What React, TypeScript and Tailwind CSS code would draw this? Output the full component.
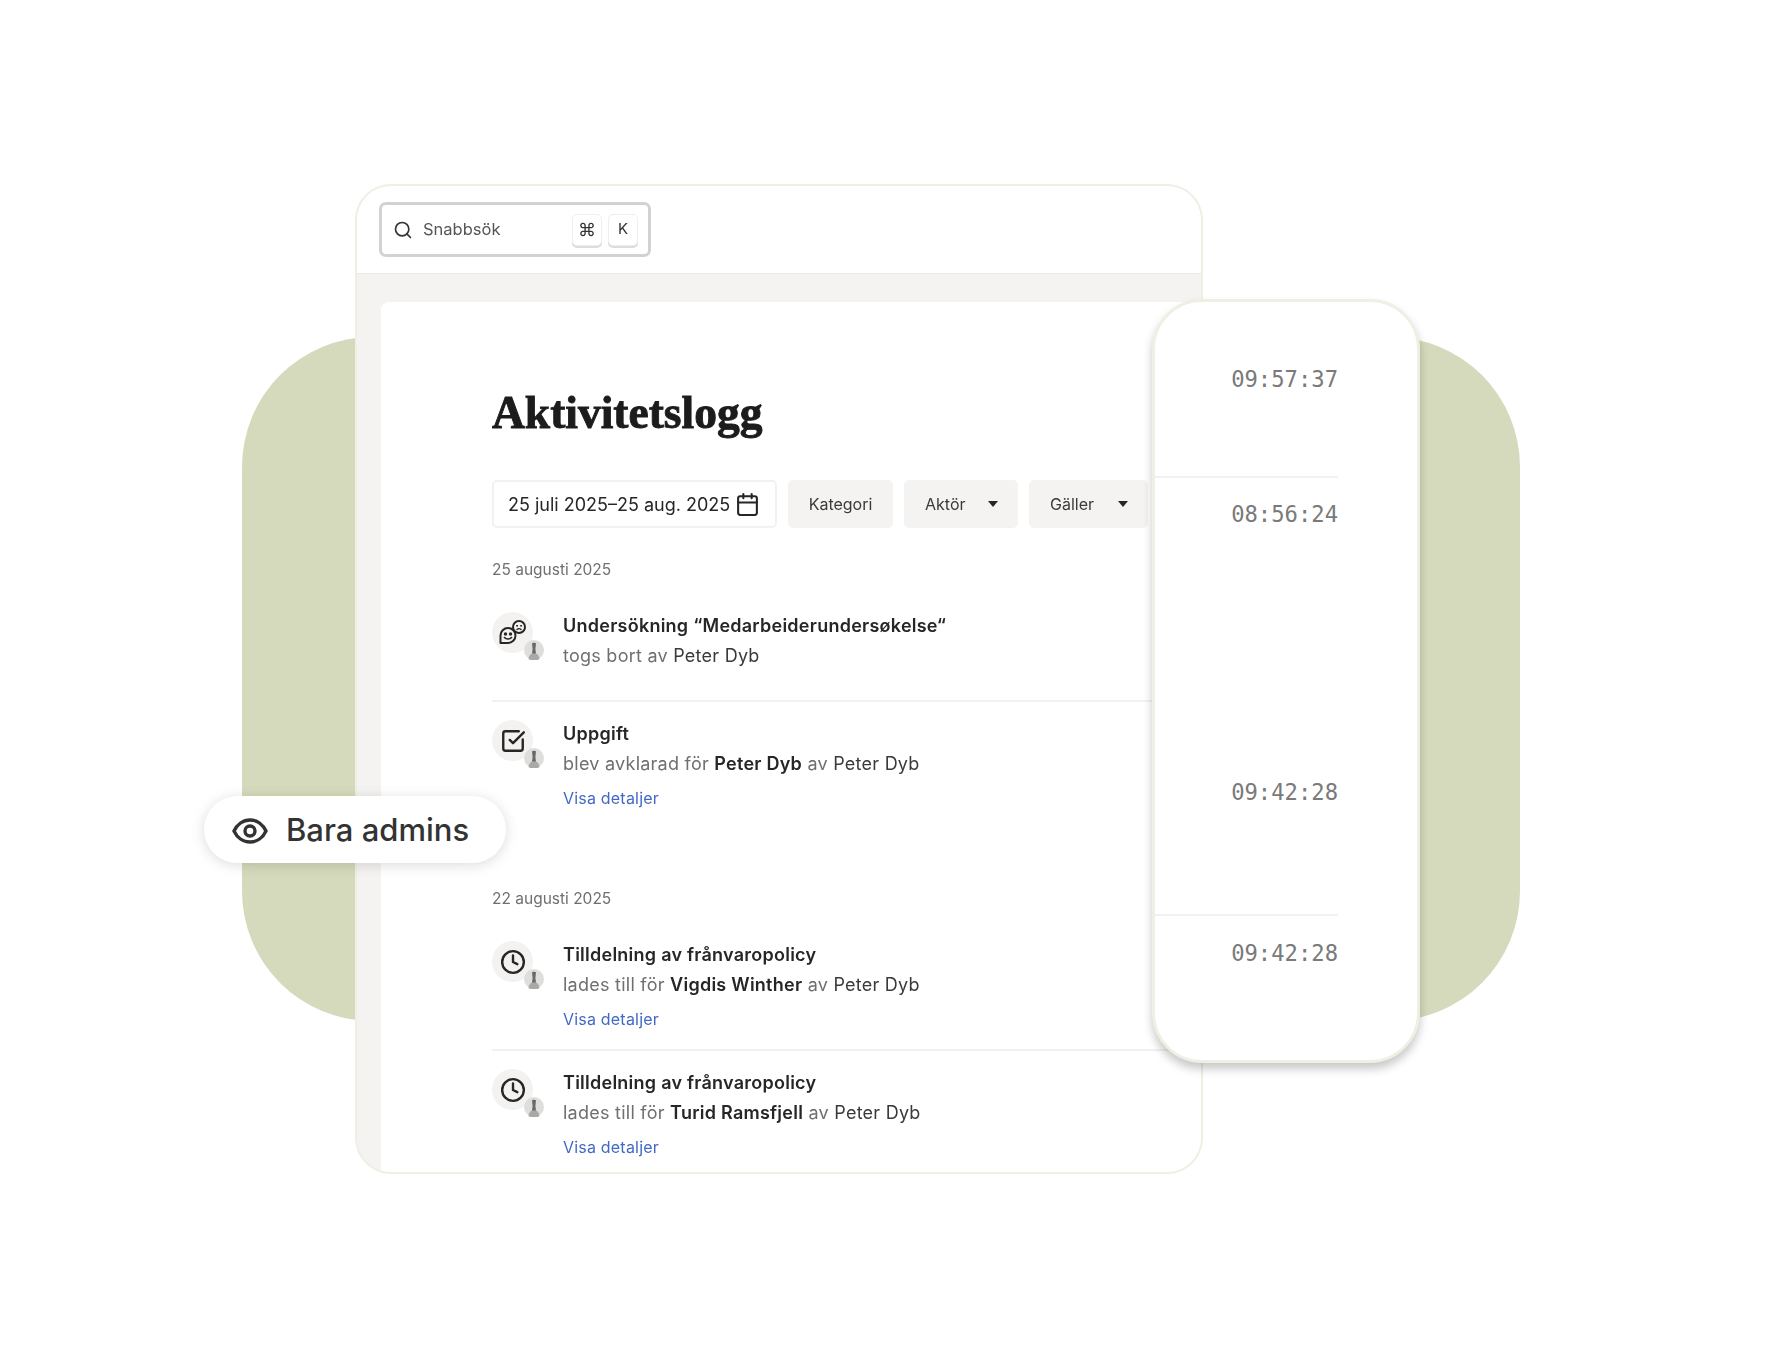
import { Calendar, Clock, Search, SquareCheckBig } from 'lucide-react'

function Avatar() {
  return (
    <svg className="absolute left-[32px] top-[28px]" width="20" height="20" viewBox="0 0 20 20">
      <circle cx="10" cy="10" r="10" fill="#dededc" />
      <path d="M4.500 19c.5-4 3-6 5.500-6s5 2 5.500 6a10 10 0 0 1-11 0z" fill="#a9a9a7" />
      <path d="M8 3.500c0-1 4-1 4 0l-.6 5.500.6 4.500h-4l.6-4.500z" fill="#6a6a68" />
    </svg>
  )
}

function BubbleIcon() {
  return (
    <svg width="28" height="26" viewBox="0 0 28 26" fill="none" stroke="#262626" strokeWidth="2" strokeLinecap="round" strokeLinejoin="round">
      <circle cx="20" cy="7" r="6" />
      <circle cx="18" cy="5.800" r=".5" fill="#262626" strokeWidth="1" />
      <circle cx="22" cy="5.800" r=".5" fill="#262626" strokeWidth="1" />
      <path d="M18 9.500c1-1 3-1 4 0" strokeWidth="1.400" />
      <path d="M1.500 23V15.500a7.500 7.500 0 1 1 7.500 7.500z" fill="#f3f2f0" />
      <circle cx="6.500" cy="14" r=".7" fill="#262626" />
      <circle cx="11.500" cy="14" r=".7" fill="#262626" />
      <path d="M5.500 17.500c1.500 2 5.500 2 7 0" strokeWidth="1.600" />
    </svg>
  )
}

function EyeIcon() {
  return (
    <svg width="36" height="26" viewBox="0 0 36 26" fill="none" stroke="#333" strokeWidth="3.400">
      <path d="M2 13C5 6.500 11 2 18 2s13 4.500 16 11c-3 6.500-9 11-16 11S5 19.500 2 13z" />
      <circle cx="18" cy="13" r="5" />
    </svg>
  )
}

function Caret() {
  return <span className="ml-auto h-0 w-0 border-x-[5px] border-t-[6px] border-x-transparent border-t-[#262626]" />
}

function Row({ icon, title, children, link, className }: { icon: React.ReactNode; title: string; children: React.ReactNode; link?: boolean; className?: string }) {
  return (
    <div className={`flex gap-[30px] ${className}`}>
      <div className="relative mt-[1px] flex h-[41px] w-[41px] shrink-0 items-center justify-center rounded-full bg-[#f3f2f0]">
        {icon}
        <Avatar />
      </div>
      <div className="text-[18px] leading-[30px] tracking-[0.25px] text-[#6f6f6d]">
        <p className="font-semibold text-[#262626]">{title}</p>
        <p>{children}</p>
        {link && <p className="mt-[9px] text-[16px] leading-[20px] tracking-[0.2px] text-[#4169c4]">Visa detaljer</p>}
      </div>
    </div>
  )
}

const B = ({ children }: { children: React.ReactNode }) => <b className="font-semibold text-[#262626]">{children}</b>
const N = ({ children }: { children: React.ReactNode }) => <span className="text-[#3a3a38]">{children}</span>

export default function App() {
  return (
    <div className="relative h-[1358px] w-[1776px] overflow-hidden bg-white pt-[184px] pl-[355px] font-['Inter',sans-serif]">
      <div className="absolute left-[242px] top-[337px] h-[684px] w-[1278px] rounded-[130px] bg-[#d4dabb]" />

      <div className="relative h-[990px] w-[848px] overflow-hidden rounded-[36px] border-2 border-[#eef0e4] bg-[#f4f3f1] blur-[0.4px]">
        <div className="flex h-[88px] items-center border-b border-[#ecebe8] bg-white pl-[22px]">
          <div className="flex h-[55px] w-[272px] items-center rounded-[7px] border-[3px] border-[#d2d2d0] bg-white pl-[11px] pr-[10px] text-[16.5px] text-[#555553]">
            <Search size={20} strokeWidth={2} className="text-[#333]" />
            <span className="ml-[10px]">Snabbsök</span>
            <div className="ml-auto flex gap-[6px] text-[15px] text-[#333]">
              <span className="flex h-[32px] w-[30px] items-center justify-center rounded-[5px] border border-[#eeeeec] bg-white text-[18px] shadow-[0_2px_0_#dcdcda]">⌘</span>
              <span className="flex h-[32px] w-[30px] items-center justify-center rounded-[5px] border border-[#eeeeec] bg-white shadow-[0_2px_0_#dcdcda]">K</span>
            </div>
          </div>
        </div>

        <div className="ml-[24px] mt-[28px] h-[900px] rounded-tl-[8px] bg-white pl-[111px] pt-[85px]">
          <h1 className="h-[52px] font-['Liberation_Serif',serif] text-[45.5px] font-bold leading-[52px] text-[#1c1c1c] [-webkit-text-stroke:0.9px_#1c1c1c]">Aktivitetslogg</h1>

          <div className="mt-[41px] flex h-[48px] gap-[11px] text-[16px] text-[#3a3a38]">
            <div className="flex w-[285px] items-center justify-between rounded-[5px] border-2 border-[#f1f1ef] pl-[14px] pr-[15px] text-[18px] text-[#262626]">
              25 juli 2025–25 aug. 2025
              <Calendar size={25} strokeWidth={2} />
            </div>
            <div className="flex w-[105px] items-center justify-center rounded-[5px] bg-[#f4f3f1]">Kategori</div>
            <div className="flex w-[114px] items-center rounded-[5px] bg-[#f4f3f1] pl-[21px] pr-[20px]">Aktör<Caret /></div>
            <div className="flex w-[119px] items-center rounded-[5px] bg-[#f4f3f1] pl-[21px] pr-[20px]">Gäller<Caret /></div>
          </div>

          <p className="mt-[30px] text-[15.5px] leading-[24px] text-[#6f6f6d]">25 augusti 2025</p>
          <Row className="mt-[29px] border-b-2 border-[#f1f1ef] pb-[29px]" icon={<BubbleIcon />} title="Undersökning “Medarbeiderundersøkelse“">
            togs bort av <N>Peter Dyb</N>
          </Row>
          <Row className="pt-[17px]" icon={<SquareCheckBig size={26} strokeWidth={2.2} color="#262626" />} title="Uppgift" link>
            blev avklarad för <B>Peter Dyb</B> av <N>Peter Dyb</N>
          </Row>

          <p className="mt-[79px] text-[15.5px] leading-[24px] text-[#6f6f6d]">22 augusti 2025</p>
          <Row className="mt-[29px] border-b-2 border-[#f1f1ef] pb-[20px]" icon={<Clock size={26} strokeWidth={2.2} color="#262626" />} title="Tilldelning av frånvaropolicy" link>
            lades till för <B>Vigdis Winther</B> av <N>Peter Dyb</N>
          </Row>
          <Row className="pt-[17px]" icon={<Clock size={26} strokeWidth={2.2} color="#262626" />} title="Tilldelning av frånvaropolicy" link>
            lades till för <B>Turid Ramsfjell</B> av <N>Peter Dyb</N>
          </Row>
        </div>
      </div>

      <div className="absolute left-[1152px] top-[299px] h-[764px] w-[268px] rounded-[50px] border-[3px] border-[#eef0e4] bg-white pr-[79px] text-right font-['DejaVu_Sans_Mono',monospace] text-[22.2px] leading-[30px] text-[#7a7a7a] shadow-[0_6px_10px_rgba(0,0,0,0.22)]">
        <p className="pt-[62px]">09:57:37</p>
        <div className="mt-[82px] border-t-2 border-[#f1f1ef]" />
        <p className="mt-[21px]">08:56:24</p>
        <p className="mt-[248px]">09:42:28</p>
        <div className="mt-[107px] border-t-2 border-[#f1f1ef]" />
        <p className="mt-[22px]">09:42:28</p>
      </div>

      <div className="absolute left-[204px] top-[796px] flex h-[67px] w-[302px] items-center gap-[18px] rounded-full bg-white pl-[28px] pt-[2px] font-['Inter',sans-serif] text-[31px] font-medium text-[#333] shadow-[0_2px_14px_rgba(0,0,0,0.14)]">
        <EyeIcon />
        Bara admins
      </div>
    </div>
  )
}
